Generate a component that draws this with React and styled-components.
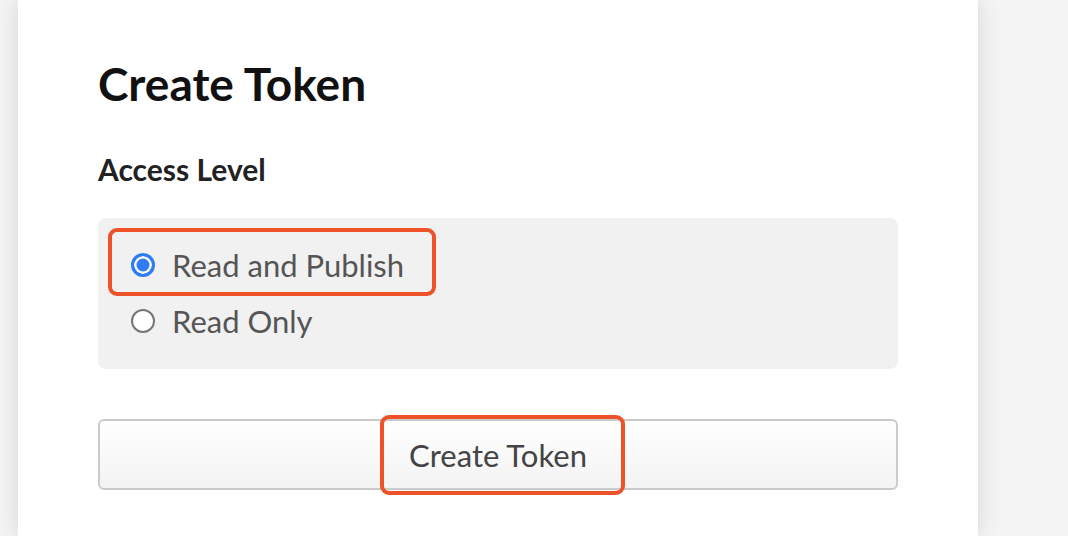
import React from 'react';
import styled, { createGlobalStyle } from 'styled-components';

const GlobalStyle = createGlobalStyle`
  html, body {
    margin: 0;
    padding: 0;
    height: 100%;
  }
  body {
    background: #f4f4f4;
    font-family: Lato, "Open Sans", sans-serif;
    overflow: hidden;
  }
  #root {
    height: 100%;
  }
`;

const Page = styled.div`
  height: 100%;
  padding-left: 18px;
  display: flex;
`;

const Card = styled.main`
  width: 960px;
  background: #fff;
  box-shadow: 0 0 22px rgba(0, 0, 0, 0.13);
  padding: 60px 80px 0;
  box-sizing: border-box;
`;

const Title = styled.h1`
  margin: 0;
  font-size: 46px;
  line-height: 48px;
  font-weight: 700;
  color: #111;
`;

const FieldLabel = styled.h2`
  margin: 45px 0 0;
  font-size: 30px;
  line-height: 32px;
  font-weight: 700;
  color: #222;
`;

const OptionsBox = styled.div`
  margin-top: 33px;
  background: #f1f1f1;
  border-radius: 8px;
  padding: 19px 0 20px 33px;
`;

const OptionRow = styled.label`
  position: relative;
  display: flex;
  align-items: center;
  height: 56px;
  gap: 17px;
  font-size: 31px;
  color: #555;
`;

const RadioDot = styled.span`
  width: 24px;
  height: 24px;
  border-radius: 50%;
  box-sizing: border-box;
  flex-shrink: 0;
  background: ${({ checked }) => (checked ? '#2f7cf6' : '#fff')};
  border: ${({ checked }) => (checked ? '3px solid #2f7cf6' : '2px solid #767676')};
  box-shadow: ${({ checked }) => (checked ? 'inset 0 0 0 2.5px #fff' : 'none')};
`;

const Mark = styled.span`
  position: absolute;
  border: 4px solid #ef5228;
  border-radius: 9px;
  box-sizing: border-box;
  pointer-events: none;
`;

const RowMark = styled(Mark)`
  left: -23px;
  top: -9px;
  width: 328px;
  height: 68px;
`;

const Button = styled.button`
  position: relative;
  display: block;
  width: 100%;
  height: 71px;
  margin-top: 50px;
  border: 2px solid #cbcbcb;
  border-radius: 6px;
  background: linear-gradient(#ffffff, #f3f3f3);
  font-family: inherit;
  font-size: 31px;
  color: #444;
  cursor: pointer;
`;

const ButtonMark = styled(Mark)`
  left: 280px;
  top: -6px;
  width: 245px;
  height: 80px;
`;

const options = [
  { id: 'publish', label: 'Read and Publish', checked: true },
  { id: 'read', label: 'Read Only', checked: false }
];

const App = () => {
  return (
    <>
      <GlobalStyle />
      <Page>
        <Card>
          <Title>Create Token</Title>
          <FieldLabel>Access Level</FieldLabel>
          <OptionsBox>
            {options.map(opt => (
              <OptionRow key={opt.id}>
                <RadioDot checked={opt.checked} />
                {opt.label}
                {opt.checked && <RowMark />}
              </OptionRow>
            ))}
          </OptionsBox>
          <Button type="button">
            Create Token
            <ButtonMark />
          </Button>
        </Card>
      </Page>
    </>
  );
};

export default App;
